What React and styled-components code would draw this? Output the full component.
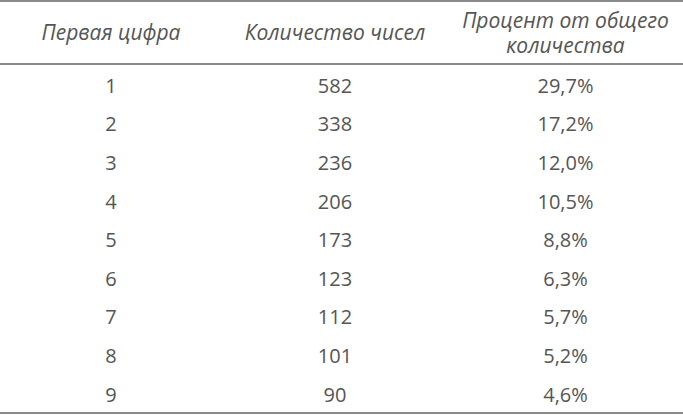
import React from "react";
import styled, { createGlobalStyle } from "styled-components";

const GlobalStyle = createGlobalStyle`
  html, body {
    margin: 0;
    padding: 0;
    background: #ffffff;
  }
`;

const rows = [
  ["1", "582", "29,7%"],
  ["2", "338", "17,2%"],
  ["3", "236", "12,0%"],
  ["4", "206", "10,5%"],
  ["5", "173", "8,8%"],
  ["6", "123", "6,3%"],
  ["7", "112", "5,7%"],
  ["8", "101", "5,2%"],
  ["9", "90", "4,6%"],
];

const colWidths = ["222px", "226px", "auto"];

const Table = styled.table`
  width: 683px;
  border-collapse: collapse;
  table-layout: fixed;
  font-family: "Open Sans", "Noto Sans", sans-serif;
  color: #555555;
  border-top: 2px solid #8a8a8a;
  border-bottom: 2px solid #8a8a8a;
`;

const HeadCell = styled.th`
  width: ${(p) => p.$w};
  height: 61px;
  font-weight: 400;
  font-style: italic;
  font-size: 21px;
  line-height: 25px;
  text-align: center;
  vertical-align: middle;
  padding: 0;
  border-bottom: 2px solid #8a8a8a;
`;

const Cell = styled.td`
  height: 35.6px;
  padding: 3px 0 0;
  font-size: 20px;
  line-height: 24px;
  text-align: center;
  vertical-align: middle;
`;

export default function App() {
  return (
    <>
      <GlobalStyle />
      <Table>
        <thead>
          <tr>
            <HeadCell $w={colWidths[0]}>Первая цифра</HeadCell>
            <HeadCell $w={colWidths[1]}>Количество чисел</HeadCell>
            <HeadCell $w={colWidths[2]}>
              Процент от общего
              <br />
              количества
            </HeadCell>
          </tr>
        </thead>
        <tbody>
          {rows.map((r) => (
            <tr key={r[0]}>
              {r.map((v, i) => (
                <Cell key={i}>{v}</Cell>
              ))}
            </tr>
          ))}
        </tbody>
      </Table>
    </>
  );
}
